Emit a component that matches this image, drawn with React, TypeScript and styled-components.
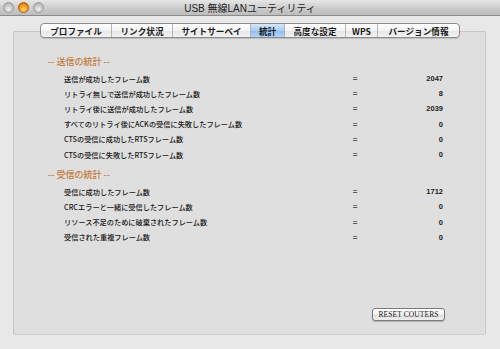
import React from "react";
import styled, { createGlobalStyle } from "styled-components";

const Global = createGlobalStyle`
  html, body { margin: 0; padding: 0; background: #e8e8e8; }
  body { width: 500px; height: 349px; overflow: hidden; font-family: "Liberation Sans", "Noto Sans CJK JP", sans-serif; }
`;

const Window = styled.div`
  width: 500px;
  height: 349px;
  display: flex;
  flex-direction: column;
  background: #e8e8e8;
`;

const TitleBar = styled.div`
  height: 15px;
  flex: none;
  display: flex;
  align-items: center;
  position: relative;
  padding-left: 3px;
  gap: 4px;
  background: linear-gradient(#e6e6e6, #c9c9c9 60%, #bdbdbd);
  border-bottom: 1px solid #8a8a8a;
`;

const Light = styled.span<{ $active?: boolean }>`
  width: 11px;
  height: 11px;
  border-radius: 50%;
  box-sizing: border-box;
  border: 1px solid ${(p) => (p.$active ? "#b05a10" : "#9a9a9a")};
  background: ${(p) =>
    p.$active
      ? "radial-gradient(circle at 50% 75%, #ffe070 0%, #f7a020 45%, #c86410 100%)"
      : "radial-gradient(circle at 50% 70%, #f0f0f0 0%, #c8c8c8 50%, #a8a8a8 100%)"};
`;

const Title = styled.div`
  position: absolute;
  left: 0;
  right: 0;
  text-align: center;
  font-size: 10px;
  color: #222;
  pointer-events: none;
  font-family: "Liberation Sans", "Noto Sans CJK JP", sans-serif;
`;

const Body = styled.div`
  flex: 1;
  display: flex;
  flex-direction: column;
  padding: 7px 14px 14px 13px;
`;

const TabBar = styled.div`
  align-self: center;
  display: flex;
  height: 15px;
  box-sizing: border-box;
  border: 1px solid #8c8c8c;
  border-radius: 4px;
  overflow: hidden;
  background: linear-gradient(#ffffff, #f4f4f4 50%, #e6e6e6 51%, #f2f2f2);
  box-shadow: 0 1px 1px rgba(0, 0, 0, 0.15);
  position: relative;
  z-index: 1;
  margin-left: 1px;
`;

const Tab = styled.div<{ $w: number; $sel?: boolean }>`
  width: ${(p) => p.$w}px;
  display: flex;
  align-items: center;
  justify-content: center;
  font-size: 8.6px;
  font-weight: bold;
  color: #1a1a1a;
  border-left: 1px solid #b4b4b4;
  box-sizing: border-box;
  font-family: "Noto Sans CJK JP", sans-serif;
  &:first-child { border-left: none; }
  ${(p) =>
    p.$sel &&
    `background: linear-gradient(#d6e8fb, #a9cdf3 50%, #8bbbee 51%, #b3d6f8);`}
`;

const Panel = styled.div`
  flex: 1;
  margin-top: -7px;
  background: #dfdfdf;
  border: 1px solid #c6c6c6;
  border-bottom-color: #cfcfcf;
  border-radius: 2px;
  display: flex;
  flex-direction: column;
  padding: 24px 0 13px 34px;
`;

const Header = styled.div<{ $top?: number }>`
  color: #c27a3a;
  font-size: 9px;
  font-weight: 500;
  line-height: 12px;
  margin-top: ${(p) => p.$top ?? 0}px;
  margin-bottom: 3px;
  font-family: "Noto Sans CJK JP", sans-serif;
`;

const Rows = styled.div`
  display: grid;
  grid-template-columns: 286px 10px 83px;
  grid-auto-rows: 15.2px;
  margin-left: 16px;
  align-items: center;
`;

const Label = styled.div`
  font-size: 7.2px;
  font-weight: 500;
  color: #161616;
  white-space: nowrap;
  font-family: "Noto Sans CJK JP", sans-serif;
`;

const Eq = styled.div`
  font-size: 8px;
  color: #555;
  font-weight: bold;
  text-align: center;
`;

const Val = styled.div`
  font-size: 7.5px;
  font-weight: bold;
  color: #222;
  text-align: right;
  font-family: "Liberation Sans", sans-serif;
`;

const Footer = styled.div`
  margin-top: auto;
  display: flex;
  justify-content: flex-end;
  padding-right: 40px;
`;

const Button = styled.button`
  width: 73px;
  height: 13px;
  padding: 0;
  border: 1px solid #7a7a7a;
  border-radius: 3px;
  background: linear-gradient(#ffffff, #f0f0f0 50%, #dcdcdc 51%, #efefef);
  box-shadow: 0 1px 1px rgba(0, 0, 0, 0.2);
  font-family: "Liberation Serif", serif;
  font-size: 7.5px;
  color: #1a1a1a;
  letter-spacing: 0.1px;
  line-height: 11px;
`;

const tabs: [string, number, boolean?][] = [
  ["プロファイル", 70],
  ["リンク状況", 61],
  ["サイトサーベイ", 78],
  ["統計", 34, true],
  ["高度な設定", 61],
  ["WPS", 32],
  ["バージョン情報", 82],
];

const tx: [string, string][] = [
  ["送信が成功したフレーム数", "2047"],
  ["リトライ無しで送信が成功したフレーム数", "8"],
  ["リトライ後に送信が成功したフレーム数", "2039"],
  ["すべてのリトライ後にACKの受信に失敗したフレーム数", "0"],
  ["CTSの受信に成功したRTSフレーム数", "0"],
  ["CTSの受信に失敗したRTSフレーム数", "0"],
];

const rx: [string, string][] = [
  ["受信に成功したフレーム数", "1712"],
  ["CRCエラーと一緒に受信したフレーム数", "0"],
  ["リソース不足のために破棄されたフレーム数", "0"],
  ["受信された重複フレーム数", "0"],
];

function StatRows({ data }: { data: [string, string][] }) {
  return (
    <Rows>
      {data.map(([l, v]) => (
        <React.Fragment key={l}>
          <Label>{l}</Label>
          <Eq>=</Eq>
          <Val>{v}</Val>
        </React.Fragment>
      ))}
    </Rows>
  );
}

export default function App() {
  return (
    <>
      <Global />
      <Window>
        <TitleBar>
          <Light />
          <Light $active />
          <Light />
          <Title>USB 無線LANユーティリティ</Title>
        </TitleBar>
        <Body>
          <TabBar>
            {tabs.map(([t, w, s]) => (
              <Tab key={t} $w={w} $sel={s}>
                {t}
              </Tab>
            ))}
          </TabBar>
          <Panel>
            <Header>-- 送信の統計 --</Header>
            <StatRows data={tx} />
            <Header $top={7}>-- 受信の統計 --</Header>
            <StatRows data={rx} />
            <Footer>
              <Button>RESET COUTERS</Button>
            </Footer>
          </Panel>
        </Body>
      </Window>
    </>
  );
}
